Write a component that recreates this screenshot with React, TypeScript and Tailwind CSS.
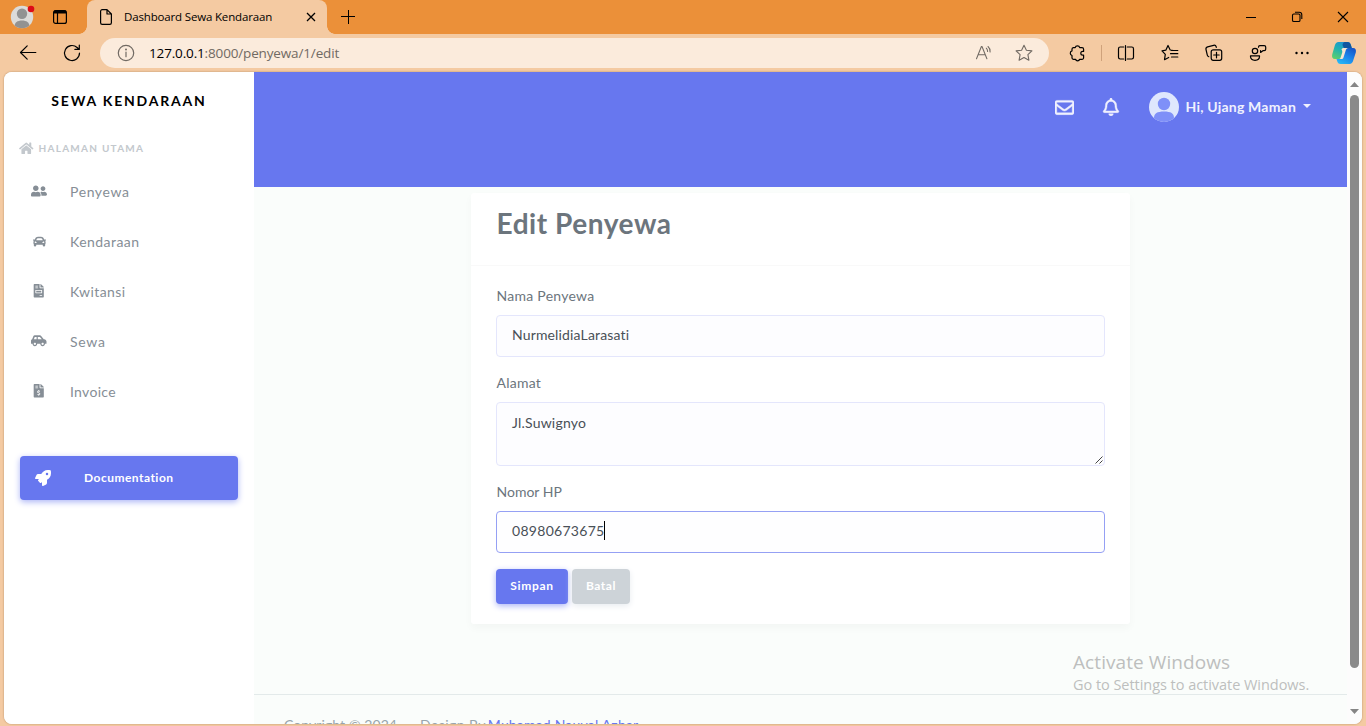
import type { ReactNode } from "react";
import {
  FaCar,
  FaCarSide,
  FaFileInvoice,
  FaFileInvoiceDollar,
  FaHome,
  FaRegBell,
  FaRegEnvelope,
  FaRocket,
  FaUserFriends,
} from "react-icons/fa";

function Line({ className, children }: { className?: string; children: ReactNode }) {
  return (
    <svg
      width="20"
      height="20"
      viewBox="0 0 20 20"
      fill="none"
      stroke="currentColor"
      strokeWidth="1.2"
      strokeLinecap="round"
      strokeLinejoin="round"
      className={`shrink-0 ${className ?? ""}`}
    >
      {children}
    </svg>
  );
}

function TabStrip() {
  return (
    <div className="flex h-[34px] shrink-0 items-center bg-[#eb9039] text-black">
      <div className="flex w-[79px] items-center">
        <svg width="26" height="26" viewBox="0 0 26 26" className="ml-[9px] shrink-0">
          <defs>
            <clipPath id="profile">
              <circle cx="13" cy="13" r="11.2" />
            </clipPath>
          </defs>
          <circle cx="13" cy="13" r="11.2" fill="#dcdbd9" />
          <g clipPath="url(#profile)" fill="#929292">
            <circle cx="13" cy="9.8" r="5.2" />
            <path d="M5.5 24v-1.5c0-4 3-6 7.500-6s7.500 2 7.500 6V26H5.500z" />
          </g>
          <circle cx="22" cy="5" r="3.300" fill="#dd0b17" />
        </svg>
        <svg width="16" height="16" viewBox="0 0 16 16" fill="none" stroke="currentColor" strokeWidth="1.200" className="ml-[17px] shrink-0">
          <rect x="1.600" y="1.600" width="12.800" height="12.800" rx="2" />
          <path d="M2 3.500h12M2 2.500h12" strokeWidth="2.200" />
          <path d="M5.500 4v10" />
        </svg>
      </div>
      <div className="h-2 w-2 self-end bg-[radial-gradient(circle_at_0_0,#eb9039_7.500px,#f4caa2_8px)]" />
      <div className="flex h-[34px] w-[240px] items-center rounded-t-[8px] bg-[#f4caa2]">
        <svg width="14" height="18" viewBox="0 0 14 18" fill="none" stroke="currentColor" strokeWidth="1.200" strokeLinejoin="round" className="ml-3 shrink-0">
          <path d="M8 1.600H3.200A1.600 1.600 0 0 0 1.600 3.200v11.600a1.600 1.600 0 0 0 1.600 1.600h7.600a1.600 1.600 0 0 0 1.600-1.600V6L8 1.600V6h4.400" />
        </svg>
        <span className="ml-[11px] w-[182px] whitespace-nowrap text-[11.5px] tracking-[-0.160px]">Dashboard Sewa Kendaraan</span>
        <svg width="10" height="10" viewBox="0 0 10 10" stroke="currentColor" strokeWidth="1.300">
          <path d="M1 1l8 8M9 1l-8 8" />
        </svg>
      </div>
      <div className="h-2 w-2 self-end bg-[radial-gradient(circle_at_100%_0,#eb9039_7.500px,#f4caa2_8px)]" />
      <svg width="14" height="14" viewBox="0 0 14 14" stroke="currentColor" strokeWidth="1.200" className="ml-[6px]">
        <path d="M7.500 0v14M0 6.500h14" strokeWidth="1" />
      </svg>
      <div className="ml-auto flex items-center pr-[17px]">
        <svg width="12" height="12" viewBox="0 0 12 12" stroke="currentColor" strokeWidth="1" className="mr-[34px]">
          <path d="M1 6.500h10" />
        </svg>
        <svg width="12" height="12" viewBox="0 0 12 12" fill="none" stroke="currentColor" strokeWidth="1.100" className="mr-[34px]">
          <rect x="1.500" y="3" width="7.500" height="7.500" rx="1.300" />
          <path d="M4 1.200h4.200a2.600 2.600 0 0 1 2.600 2.600V8" />
        </svg>
        <svg width="12" height="12" viewBox="0 0 12 12" stroke="currentColor" strokeWidth="1.100">
          <path d="M1 1l10 10M11 1L1 11" />
        </svg>
      </div>
    </div>
  );
}

function Copilot() {
  return (
    <svg width="26" height="24" viewBox="0 0 26 24" className="shrink-0">
      <defs>
        <linearGradient id="cpA" x1="0.700" y1="0" x2="0.200" y2="1">
          <stop offset="0" stopColor="#1a8fd6" />
          <stop offset="0.500" stopColor="#22b2b0" />
          <stop offset="1" stopColor="#5ccf6c" />
        </linearGradient>
        <linearGradient id="cpB" x1="0.900" y1="0" x2="0.200" y2="1">
          <stop offset="0" stopColor="#1550c4" />
          <stop offset="0.500" stopColor="#1b83ea" />
          <stop offset="1" stopColor="#28b8f5" />
        </linearGradient>
      </defs>
      <path d="M7.500 1h9c2 0 2.800 1 3.400 3l.9 3h-4.300c-1.600 0-2.300.8-2.800 2.400l-2 6.300c-.5 1.500-1.200 2.300-2.800 2.300H4C1.500 18 .6 16.200 1.200 13.500l2.600-9C4.500 2.200 5.500 1 7.500 1z" fill="url(#cpA)" />
      <path d="M14 1h2.500c2 0 2.800 1 3.400 3l.9 3h-4.300c-1.400 0-2.100.7-2.600 2L11.500 4C12 2.200 12.600 1 14 1z" fill="#12569f" />
      <path d="M18.500 23h-9c-2 0-2.800-1-3.400-3l-.6-2h3.500c1.600 0 2.300-.8 2.800-2.300l2-6.300c.5-1.600 1.200-2.400 2.800-2.400H22c2.500 0 3.400 1.800 2.800 4.500l-2.600 8c-.7 2.300-1.700 3.500-3.700 3.500z" fill="url(#cpB)" />
      <path d="M10.500 8.500C11 7.300 11.800 7 13 7h4.200c-1.400.2-2 1-2.500 2.400l-2.200 7c-.4 1.200-1 1.600-2.200 1.600H8.200c.8-.2 1.200-.8 1.500-1.800l1.500-4.700c.3-1.200 0-2-.7-3z" fill="#f6e6d2" />
    </svg>
  );
}

function Toolbar() {
  return (
    <div className="flex h-[38px] shrink-0 items-center bg-[#f4caa2] text-black">
      <div className="flex w-[100px] items-center pl-[18px]">
        <Line className="mr-6">
          <path d="M17.800 9.500H2.600M9.200 2.800L2.500 9.500l6.700 6.700" />
        </Line>
        <Line>
          <path d="M17.500 10a7.500 7.500 0 1 1-2.400-5.500l2 1.800M17.300 2v4.400h-4.400" />
        </Line>
      </div>
      <div className="flex h-[30px] w-[949px] items-center rounded-full bg-[#fbebdc] text-[#716a63]">
        <Line className="ml-4">
          <circle cx="10" cy="10" r="7.700" />
          <path d="M10 9v4.700" />
          <circle cx="10" cy="6.600" r="0.400" fill="currentColor" />
        </Line>
        <span className="ml-[13px] whitespace-nowrap text-[13.5px] tracking-[-0.150px]">
          <span className="text-black">127.0.0.1</span>:8000/penyewa/1/edit
        </span>
        <Line className="ml-auto mr-5">
          <path d="M2.500 15.800L7.400 3.500h.6l4.900 12.300M4.300 11.700h6.800M12.300 5.200c1 1 1.300 2 1.300 3.300M14 3.500c1.500 1.300 2.200 3.200 2.100 5.400" strokeWidth="1.050" />
        </Line>
        <Line className="mr-[15px]">
          <path d="M10 2.200l2.400 5 5.500.7-4 3.800 1 5.500-4.900-2.700-4.900 2.700 1-5.500-4-3.800 5.500-.7z" strokeWidth="1.100" />
        </Line>
      </div>
      <Line className="ml-[18px]">
        <path d="M6.300 4.600h1.900a2.300 2.300 0 0 1 4.500 0h2.300a1.600 1.600 0 0 1 1.600 1.600v2.200h-.9a1.700 1.700 0 0 0 0 3.800h.9v2.500a1.600 1.600 0 0 1-1.600 1.600h-2.300a2.200 2.200 0 0 1-4.200 0H6.600a1.600 1.600 0 0 1-1.600-1.600v-2.200a2.400 2.400 0 0 1 0-4.600V6.200a1.600 1.600 0 0 1 1.300-1.600z" />
      </Line>
      <div className="ml-[14px] h-4 w-px bg-[#cfa27b]" />
      <Line className="ml-[14px]">
        <path d="M7.700 4H4.200A1.700 1.700 0 0 0 2.500 5.700v8.600A1.700 1.700 0 0 0 4.200 16h3.500M11.300 4h4.500a1.700 1.700 0 0 1 1.700 1.700v8.600a1.700 1.700 0 0 1-1.700 1.700h-4.500M9.500 2.500v15" />
      </Line>
      <Line className="ml-6">
        <path d="M13.500 7.500l-3.300-.5L8 2.500 5.800 7.200 2 7.800l3.300 3.600-.8 5.300L8.700 14.500M11.500 7.500h6.300M10.500 10.700h7.300M11.500 14h6.300" />
      </Line>
      <Line className="ml-6">
        <rect x="7.200" y="6.800" width="10.500" height="10.500" rx="2" />
        <path d="M12.500 9.300v5.500M9.700 12h5.500M4.800 13.700a2.300 2.300 0 0 1-1.500-1.600L2 6.500a2.200 2.200 0 0 1 1.600-2.600l6-1.600a2.200 2.200 0 0 1 2.600 1.500l.1.500" />
      </Line>
      <Line className="ml-6">
        <circle cx="7" cy="8" r="2.700" />
        <path d="M2.500 12.800h9v.8c0 2.200-1.700 3.700-4.500 3.700s-4.500-1.500-4.500-3.700zM10.500 4.200c0-1 .5-1.500 1.400-1.500h4.300c.9 0 1.500.5 1.500 1.400v2.200c0 .9-.6 1.400-1.500 1.400h-1.300l-2.300 1.700V7.700" />
      </Line>
      <svg width="20" height="20" viewBox="0 0 20 20" fill="currentColor" className="ml-6 shrink-0">
        <circle cx="4.500" cy="10" r="1.200" />
        <circle cx="10" cy="10" r="1.200" />
        <circle cx="15.500" cy="10" r="1.200" />
      </svg>
      <div className="ml-[19px] flex">
        <Copilot />
      </div>
    </div>
  );
}

function NavItem({ icon, children }: { icon: ReactNode; children: ReactNode }) {
  return (
    <li className="flex h-[50px] items-center text-[14px] text-[#868e96]">
      <span className="ml-[15px] flex w-10 justify-center">{icon}</span>
      <span className="ml-[11px]">{children}</span>
    </li>
  );
}

function Sidebar() {
  return (
    <aside className="flex w-[250px] shrink-0 flex-col bg-white shadow-[0_4px_8px_rgba(0,0,0,0.03)]">
      <div className="flex h-[58px] items-center justify-center pb-[2px] text-[14px] font-bold tracking-[1.800px] text-black">
        SEWA KENDARAAN
      </div>
      <div className="flex h-9 items-center pl-[15px] text-[10px] font-bold tracking-[1.260px] text-[#c3c8cd]">
        <FaHome size={14.500} className="mr-[5px]" />
        HALAMAN UTAMA
      </div>
      <ul className="flex flex-col">
        <NavItem icon={<FaUserFriends size={16} />}>
          <span className="tracking-[0.600px]">Penyewa</span>
        </NavItem>
        <NavItem icon={<FaCar size={13} />}>
          <span className="tracking-[0.450px]">Kendaraan</span>
        </NavItem>
        <NavItem icon={<FaFileInvoice size={13.500} />}>
          <span className="tracking-[0.400px]">Kwitansi</span>
        </NavItem>
        <NavItem icon={<FaCarSide size={15.500} />}>
          <span className="tracking-[0.700px]">Sewa</span>
        </NavItem>
        <NavItem icon={<FaFileInvoiceDollar size={13.500} />}>
          <span className="tracking-[0.300px]">Invoice</span>
        </NavItem>
      </ul>
      <a className="mx-4 mt-[40px] flex h-11 items-center rounded-[4px] bg-[#6777ef] text-[12px] font-bold tracking-[0.480px] text-white shadow-[0_2px_6px_#acb5f6]">
        <FaRocket size={16} className="ml-[15px]" />
        <span className="ml-[33px]">Documentation</span>
      </a>
    </aside>
  );
}

function Navbar() {
  return (
    <header className="flex h-[115px] shrink-0 items-start bg-[#6777ef] text-[#f0f1fe]">
      <div className="ml-auto flex h-[70px] items-center pr-[36px]">
        <FaRegEnvelope size={19} stroke="currentColor" strokeWidth={12} className="mr-[28px]" />
        <FaRegBell size={18} stroke="currentColor" strokeWidth={12} className="mr-[29px]" />
        <svg width="30" height="30" viewBox="0 0 30 30">
          <defs>
            <clipPath id="avatar">
              <circle cx="15" cy="15" r="15" />
            </clipPath>
          </defs>
          <circle cx="15" cy="15" r="15" fill="#dfe7fd" />
          <g clipPath="url(#avatar)" fill="#7f90f8">
            <circle cx="15" cy="12" r="6.200" />
            <path d="M5 30v-4c0-4.500 3-6.500 10-6.500s10 2 10 6.500v4z" />
          </g>
        </svg>
        <span className="ml-[7px] whitespace-nowrap pb-px text-[14px] font-bold tracking-[0.200px]">Hi, Ujang Maman</span>
        <svg width="8" height="4" viewBox="0 0 8 4" fill="currentColor" className="mb-[2px] ml-[7px]">
          <path d="M0 0h8L4 4z" />
        </svg>
      </div>
    </header>
  );
}

function Label({ children }: { children: ReactNode }) {
  return <div className="mb-[7px] flex h-6 items-center pb-[2px] pl-[0.500px] text-[14px] text-[#6c757d]">{children}</div>;
}

function EditCard() {
  return (
    <section className="mt-[6px] ml-[217px] flex h-[431px] w-[659px] shrink-0 flex-col rounded-[3px] bg-white shadow-[0_4px_8px_rgba(0,0,0,0.03)]">
      <div className="flex h-[73px] shrink-0 items-start border-b border-[#f9f9f9] px-[25.500px] pt-[9px]">
        <h1 className="text-[28px] font-bold leading-[42px] tracking-[0.550px] text-[#6c757d]">Edit Penyewa</h1>
      </div>
      <form className="flex flex-col px-[25px] pt-[18px] text-[14px] text-[#495057]">
        <Label>
          <span className="tracking-[0.270px]">Nama Penyewa</span>
        </Label>
        <div className="flex h-[42px] items-center rounded-[4px] border border-[#e4e6fc] bg-[#fdfdff] px-[15px] pb-[3px]">
          <span className="tracking-[0.150px]">NurmelidiaLarasati</span>
        </div>
        <div className="h-[14px]" />
        <Label>
          <span className="tracking-[0.230px]">Alamat</span>
        </Label>
        <div className="relative flex h-16 items-start rounded-[4px] border border-[#e4e6fc] bg-[#fdfdff] px-[15px] pt-[9px]">
          <span className="tracking-[0.200px]">Jl.Suwignyo</span>
          <svg width="8" height="8" viewBox="0 0 8 8" stroke="#444" strokeWidth="1" className="absolute bottom-px right-px">
            <path d="M0.500 7.500l7-7M4.500 7.500l3-3" />
          </svg>
        </div>
        <div className="h-[14px]" />
        <Label>Nomor HP</Label>
        <div className="flex h-[42px] items-center rounded-[4px] border border-[#95a0f4] bg-[#fefeff] px-[15px] pb-[3px]">
          <span className="tracking-[0.290px]">08980673675</span>
          <span className="-ml-px h-[19px] w-px bg-black" />
        </div>
        <div className="mt-4 flex gap-1 text-[12px] font-bold text-white">
          <div className="flex h-[35px] w-[72px] items-center justify-center rounded-[4px] bg-[#6777ef] pb-[2px] tracking-[0.690px] shadow-[0_2px_6px_#acb5f6]">
            Simpan
          </div>
          <div className="flex h-[35px] w-[58px] items-center justify-center rounded-[4px] bg-[#cdd3d8] pb-[2px] tracking-[0.500px] shadow-[0_2px_6px_#e8ecf0]">
            Batal
          </div>
        </div>
      </form>
    </section>
  );
}

function Scrollbar() {
  return (
    <div className="flex w-[15px] shrink-0 flex-col items-center bg-[#fcfcfc]">
      <svg width="9" height="5" viewBox="0 0 9 5" fill="#858585" className="mt-[10px]">
        <path d="M0 5h9L4.500 0z" />
      </svg>
      <div className="mt-2 h-[573px] w-[9px] rounded-full bg-[#8a8a8a]" />
      <svg width="9" height="5" viewBox="0 0 9 5" fill="#858585" className="mt-[41px]">
        <path d="M0 0h9L4.500 5z" />
      </svg>
    </div>
  );
}

export default function App() {
  return (
    <div className="relative flex h-[726px] w-[1366px] flex-col overflow-hidden bg-[#f4caa2] font-['Open_Sans',sans-serif]">
      <TabStrip />
      <Toolbar />
      <div className="mx-1 flex h-[652px] overflow-hidden rounded-[8px] bg-white font-['Lato',sans-serif] shadow-[0_0_2px_rgba(90,50,10,0.45)]">
        <Sidebar />
        <main className="flex w-[1093px] shrink-0 flex-col bg-[#fafdfb]">
          <Navbar />
          <EditCard />
          <footer className="mt-[70px] flex h-[60px] shrink-0 items-center border-t border-[#e3eaea] pl-[30px] text-[14px] text-[#98a6ad]">
            <span className="tracking-[0.080px]">Copyright © 2024</span>
            <span className="ml-[23px] tracking-[0.400px]">Design By</span>
            <a className="ml-[2px] tracking-[0.190px] text-[#6777ef]">Muhamad Nauval Azhar</a>
          </footer>
        </main>
        <Scrollbar />
      </div>
      <div className="absolute left-[1073px] top-[650px] whitespace-nowrap text-[#bdbfbe]">
        <div className="text-[19px] leading-6 tracking-[0.080px]">Activate Windows</div>
        <div className="text-[14.500px] leading-[22px] tracking-[-0.040px]">Go to Settings to activate Windows.</div>
      </div>
    </div>
  );
}
